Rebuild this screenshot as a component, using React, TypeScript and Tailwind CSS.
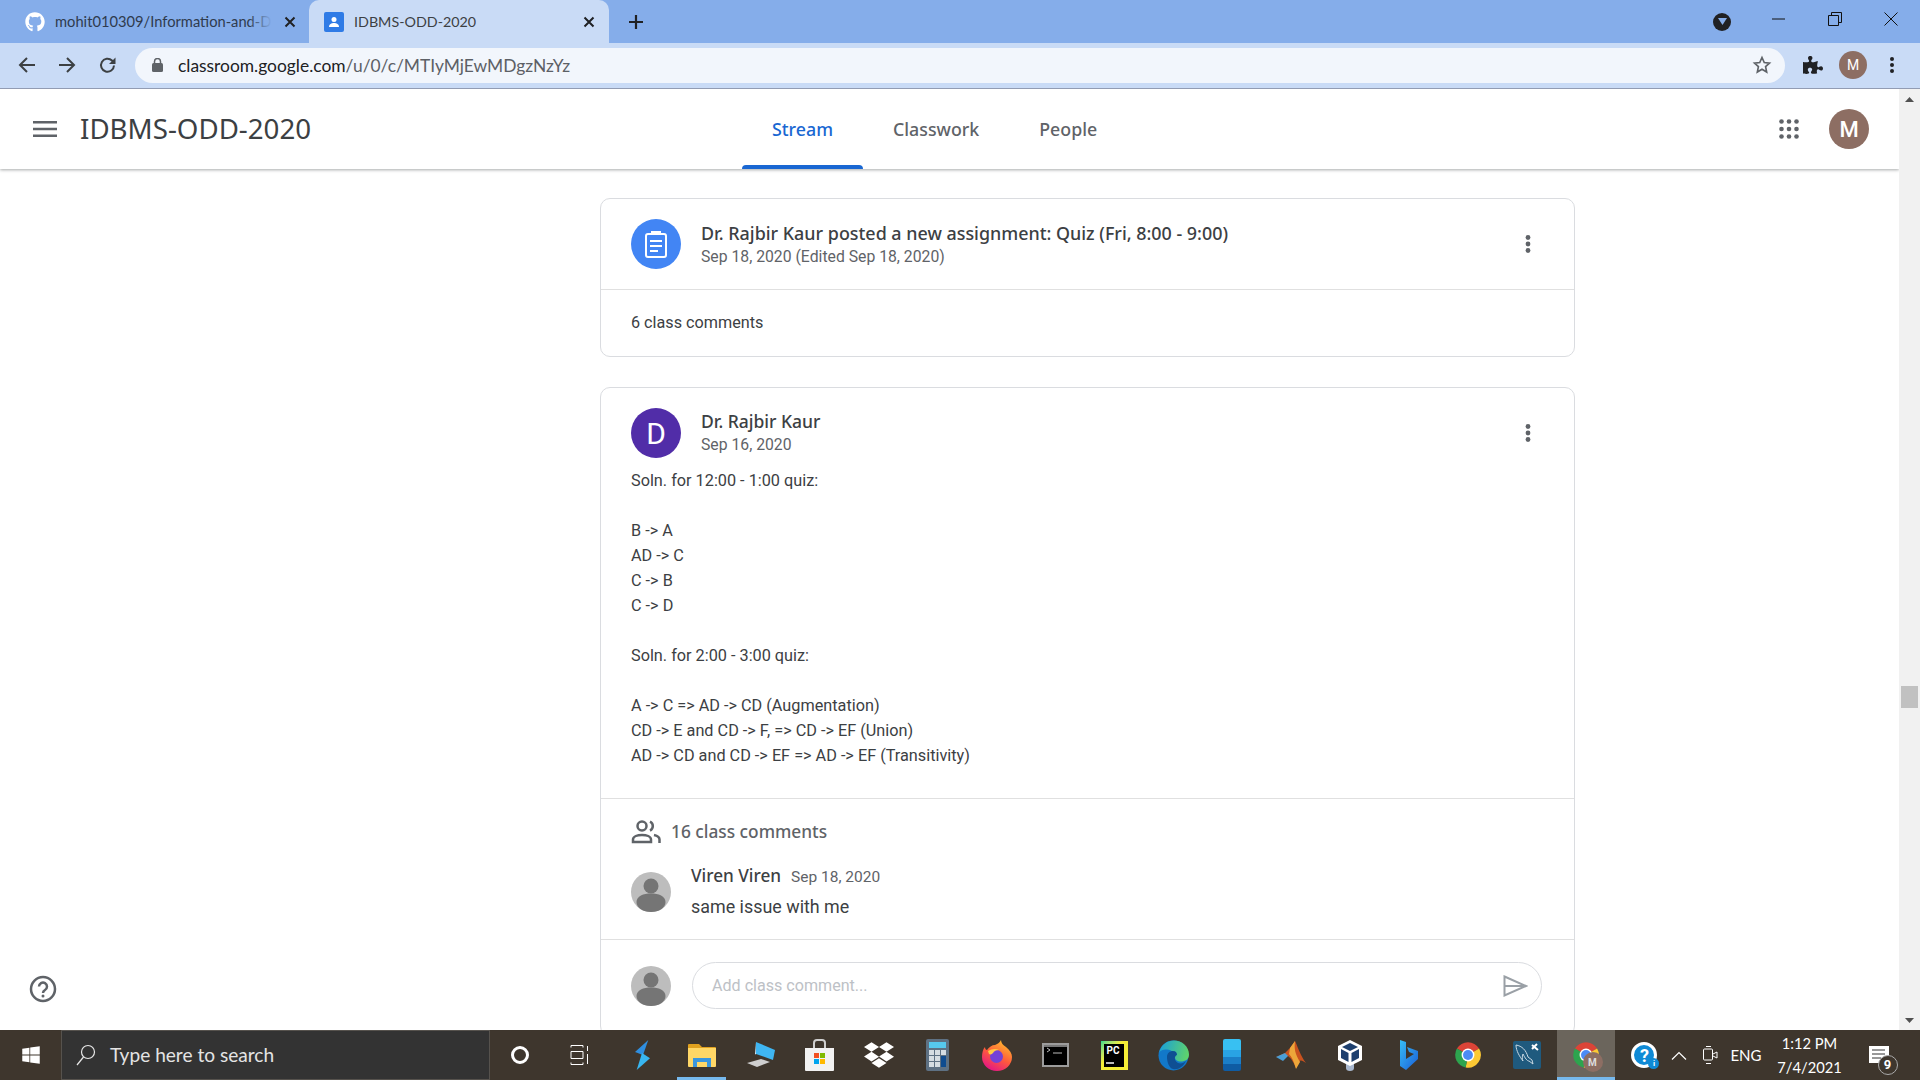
import { FaGithub, FaWindows, FaDropbox, FaPuzzlePiece } from "react-icons/fa";
import { ReactNode } from "react";

const sans = "font-['Roboto',sans-serif]";
const heading = "font-['Noto_Sans',sans-serif]";
const ui = "font-['Lato',sans-serif]";

const MoreDots = ({ className = "" }: { className?: string }) => (
  <svg width="24" height="24" viewBox="0 0 24 24" fill="#5f6368" className={className}>
    <circle cx="12" cy="5.5" r="2.4" />
    <circle cx="12" cy="12" r="2.4" />
    <circle cx="12" cy="18.5" r="2.4" />
  </svg>
);

const Person = ({ size = 40 }: { size?: number }) => (
  <svg width={size} height={size} viewBox="0 0 40 40" className="shrink-0">
    <circle cx="20" cy="20" r="20" fill="#bdbdbd" />
    <ellipse cx="20" cy="14" rx="7.5" ry="7.5" fill="#757575" />
    <path d="M5.5 30c0-6 7-8.500 14.500-8.500S34.500 24 34.500 30 28 40 20 40 5.500 36 5.500 30z" fill="#757575" />
  </svg>
);

const Tab = ({ label, active = false }: { label: string; active?: boolean }) => (
  <div className={`relative h-full px-[30px] flex items-center text-[17.800px] font-medium ${heading} ${active ? "text-[#1967d2]" : "text-[#5f6368]"}`}>
    {label}
    {active && <div className="absolute left-0 right-0 bottom-0 h-[4px] rounded-t-[4px] bg-[#1967d2]" />}
  </div>
);

const Cell = ({ children, active = false }: { children: ReactNode; active?: boolean }) => (
  <div className={`relative w-[58.95px] h-full flex items-center justify-center ${active ? "bg-[#6b655c]" : ""}`}>
    {children}
    {active && <div className="absolute left-0 right-0 bottom-0 h-[3px] bg-[#76b9ed]" />}
  </div>
);

const ChromeLogo = () => (
  <svg width="28" height="28" viewBox="0 0 48 48">
    <path d="M24 24L5 13A22 22 0 0 1 43 13z" fill="#db4437" />
    <path d="M24 24L43 13A22 22 0 0 1 20 45.600z" fill="#fcc934" />
    <path d="M24 24L20 45.600A22 22 0 0 1 5 13z" fill="#2da44e" />
    <circle cx="24" cy="24" r="11" fill="#fff" />
    <circle cx="24" cy="24" r="8.500" fill="#4c8bf5" />
  </svg>
);

export default function App() {
  return (
    <div className={`w-[1920px] h-[1080px] flex flex-col overflow-hidden bg-white ${sans}`}>
      {/* tab strip */}
      <div className="h-[43px] shrink-0 bg-[#85adea] flex items-center">
        <div className="w-[309px] h-full flex items-center pl-[25px] pr-[10px]">
          <FaGithub className="text-white text-[20px] shrink-0" />
          <div className="relative ml-[10px] w-[217px]">
            <span className={`block whitespace-nowrap text-[14.700px] text-[#2f3b4e] ${ui}`}>mohit010309/Information-and-D</span>
            <div className="absolute right-0 top-0 bottom-0 w-[24px] bg-linear-to-r from-transparent to-[#85adea]" />
          </div>
          <svg width="12" height="12" viewBox="0 0 12 12" className="ml-[12px]" stroke="#202124" strokeWidth="2"><path d="M1.500 1.500l9 9M10.500 1.500l-9 9" /></svg>
        </div>
        <div className="w-[300px] h-full bg-[#c9dbf6] rounded-t-[10px] flex items-center pl-[15px] pr-[14px]">
          <svg width="20" height="20" viewBox="0 0 20 20" className="shrink-0">
            <rect width="20" height="20" rx="2" fill="#2f7be6" />
            <circle cx="10" cy="7.500" r="2.500" fill="#fff" />
            <path d="M5 15c0-3 2.500-4 5-4s5 1 5 4z" fill="#fff" />
          </svg>
          <span className={`ml-[10px] flex-1 text-[14.300px] text-[#3c4043] ${ui}`}>IDBMS-ODD-2020</span>
          <svg width="12" height="12" viewBox="0 0 12 12" stroke="#202124" strokeWidth="2"><path d="M1.500 1.500l9 9M10.500 1.500l-9 9" /></svg>
        </div>
        <svg width="16" height="16" viewBox="0 0 16 16" className="ml-[19px]" stroke="#202124" strokeWidth="2.200"><path d="M8 1v14M1 8h14" /></svg>
        <div className="flex-1" />
        <div className="w-[18px] h-[18px] rounded-full bg-[#202124] flex items-center justify-center mr-[41px]">
          <svg width="9" height="7" viewBox="0 0 9 7"><path d="M0 0h9L4.500 7z" fill="#85adea" /></svg>
        </div>
        <div className="flex items-center gap-[42px] pr-[22px] -mt-[6px]">
          <svg width="14" height="14" viewBox="0 0 14 14" stroke="#111"><path d="M0 7h13" /></svg>
          <svg width="14" height="14" viewBox="0 0 14 14" fill="none" stroke="#111"><path d="M.500 3.500h10v10H.500zM3.500 3.500V.500h10v10h-3" /></svg>
          <svg width="14" height="14" viewBox="0 0 14 14" stroke="#111"><path d="M.500.500l13 13M13.500.500l-13 13" /></svg>
        </div>
      </div>

      {/* toolbar */}
      <div className="h-[45px] shrink-0 bg-[#c9dbf6] flex items-center pb-[1px]">
        <div className="w-[135px] flex items-center pl-[18px] gap-[22px]">
          <svg width="18" height="18" viewBox="0 0 18 18" fill="none" stroke="#3c4043" strokeWidth="2"><path d="M17 9H2M9 2L2 9l7 7" /></svg>
          <svg width="18" height="18" viewBox="0 0 18 18" fill="none" stroke="#3c4043" strokeWidth="2"><path d="M1 9h15M9 2l7 7-7 7" /></svg>
          <svg width="18" height="18" viewBox="0 0 18 18" fill="none" stroke="#3c4043" strokeWidth="2" className="ml-[1px]"><path d="M15 9.500A6.500 6.500 0 1 1 13 4.500L15.500 7" /><path d="M16.500 1.500v6.500H10z" fill="#3c4043" stroke="none" /></svg>
        </div>
        <div className="w-[1650px] h-[35px] rounded-full bg-[#f2f6fc] flex items-center pl-[17px] pr-[13px]">
          <svg width="11" height="14" viewBox="0 0 11 14" className="shrink-0"><path d="M2.500 5V3.500a3 3 0 0 1 6 0V5" fill="none" stroke="#5f6368" strokeWidth="1.500" /><rect y="5" width="11" height="9" rx="1.500" fill="#5f6368" /></svg>
          <span className={`ml-[15px] mt-[2px] text-[17.400px] text-[#5c6066] ${ui}`}>
            <span className="text-[#202124]">classroom.google.com</span>/u/0/c/MTIyMjEwMDgzNzYz
          </span>
          <div className="flex-1" />
          <svg width="20" height="20" viewBox="0 0 24 24" fill="none" stroke="#5f6368" strokeWidth="2"><path d="M12 3l2.700 6 6.300.700-4.700 4.300 1.300 6.500L12 17.200 6.400 20.500l1.300-6.500L3 9.700 9.300 9z" /></svg>
        </div>
        <FaPuzzlePiece className="ml-[18px] text-[20px] text-[#202124] shrink-0" />
        <div className="ml-[16px] w-[28px] h-[28px] rounded-full bg-[#8d6e63] text-white text-[14px] flex items-center justify-center shrink-0">M</div>
        <svg width="6" height="18" viewBox="0 0 6 18" fill="#202124" className="ml-[22px] shrink-0"><circle cx="3" cy="3" r="2" /><circle cx="3" cy="9" r="2" /><circle cx="3" cy="15" r="2" /></svg>
      </div>
      <div className="h-px shrink-0 bg-[#929cb3]" />

      {/* page + scrollbar */}
      <div className="flex-1 min-h-0 flex">
        <div className="relative flex-1 min-w-0 overflow-hidden">
          <header className="h-[80px] flex items-center shadow-[0_1px_3px_rgba(60,64,67,0.45)] relative z-10 bg-white">
            <svg width="24" height="24" viewBox="0 0 24 24" fill="#5f6368" className="ml-[33px] shrink-0"><path d="M0 4h24v2.500H0zM0 10.800h24v2.500H0zM0 17.500h24V20H0z" /></svg>
            <h1 className={`ml-[23px] w-[662px] text-[27.700px] text-[#3c4043] -mt-[1px] ${heading}`}>IDBMS-ODD-2020</h1>
            <nav className="h-full flex">
              <Tab label="Stream" active />
              <Tab label="Classwork" />
              <Tab label="People" />
            </nav>
            <div className="flex-1" />
            <svg width="20" height="20" viewBox="0 0 20 20" fill="#5f6368" className="shrink-0">
              {[2.500, 10, 17.500].flatMap((y) => [2.500, 10, 17.500].map((x) => <circle key={`${x}-${y}`} cx={x} cy={y} r="2.300" />))}
            </svg>
            <div className="ml-[30px] mr-[30px] w-[40px] h-[40px] rounded-full bg-[#8d6e63] text-white text-[22px] font-medium flex items-center justify-center">M</div>
          </header>

          <main className="pl-[600px] pt-[29px] w-[1575px]">
            {/* assignment card */}
            <section className="border border-[#dadce0] rounded-[10px]">
              <div className="h-[91px] flex items-center pl-[30px] pr-[34px] border-b border-[#e0e0e0]">
                <div className="w-[50px] h-[50px] rounded-full bg-[#4285f4] flex items-center justify-center shrink-0">
                  <svg width="24" height="28" viewBox="0 0 24 28" fill="none" stroke="#fff" strokeWidth="2"><rect x="2" y="4" width="20" height="23" rx="2" /><path d="M8 4V2h8v2zM6 11h12M6 16h12M6 21h8" /></svg>
                </div>
                <div className="ml-[20px] flex-1">
                  <div className={`text-[17.900px] leading-[24px] font-medium text-[#3c4043] ${heading}`}>Dr. Rajbir Kaur posted a new assignment: Quiz (Fri, 8:00 - 9:00)</div>
                  <div className="mt-[1px] text-[15.750px] leading-[22px] text-[#5f6368]">Sep 18, 2020 (Edited Sep 18, 2020)</div>
                </div>
                <MoreDots />
              </div>
              <div className="h-[66px] flex items-center pl-[30px] text-[16.200px] text-[#3c4043]">6 class comments</div>
            </section>

            {/* post card */}
            <section className="mt-[30px] border border-[#dadce0] rounded-[10px]">
              <div className="pt-[20px] flex items-center pl-[30px] pr-[34px]">
                <div className="w-[50px] h-[50px] rounded-full bg-[#512da8] text-white text-[30px] flex items-center justify-center shrink-0">D</div>
                <div className="ml-[20px] flex-1">
                  <div className={`text-[17.500px] leading-[24px] font-medium text-[#3c4043] -mt-[1px] ${heading}`}>Dr. Rajbir Kaur</div>
                  <div className="mt-[1px] text-[15.750px] leading-[22px] text-[#5f6368]">Sep 16, 2020</div>
                </div>
                <MoreDots />
              </div>
              <div className="pl-[30px] pt-[10px] pb-[30px] text-[16.250px] leading-[25px] text-[#3c4043] border-b border-[#e0e0e0]">
                <p>Soln. for 12:00 - 1:00 quiz:</p>
                <p className="mt-[25px]">B -&gt; A</p>
                <p>AD -&gt; C</p>
                <p>C -&gt; B</p>
                <p>C -&gt; D</p>
                <p className="mt-[25px]">Soln. for 2:00 - 3:00 quiz:</p>
                <p className="mt-[25px]">A -&gt; C =&gt; AD -&gt; CD (Augmentation)</p>
                <p>CD -&gt; E and CD -&gt; F, =&gt; CD -&gt; EF (Union)</p>
                <p>AD -&gt; CD and CD -&gt; EF =&gt; AD -&gt; EF (Transitivity)</p>
              </div>
              <div className="pl-[30px] pt-[20px] pb-[20px] border-b border-[#e0e0e0]">
                <div className="flex items-center h-[26px]">
                  <svg width="30" height="24" viewBox="0 0 30 24" fill="none" stroke="#5f6368" strokeWidth="2.500"><circle cx="11" cy="6" r="4.500" /><path d="M2 22v-2.500c0-3 4.500-4.500 9-4.500s9 1.500 9 4.500V22zM19 1.500a5 5 0 0 1 0 9M23 15c3 .700 5.500 2 5.500 4.500V23" /></svg>
                  <span className={`ml-[10px] text-[17.300px] font-medium text-[#5f6368] ${heading}`}>16 class comments</span>
                </div>
                <div className="mt-[27px] flex items-start">
                  <Person />
                  <div className="ml-[20px] -mt-[8px]">
                    <div className="flex items-baseline">
                      <span className={`text-[17.200px] leading-[24px] font-medium text-[#3c4043] ${heading}`}>Viren Viren</span>
                      <span className="ml-[10px] text-[15.500px] text-[#5f6368]">Sep 18, 2020</span>
                    </div>
                    <div className="mt-[5px] text-[17.900px] leading-[25px] text-[#3c4043]">same issue with me</div>
                  </div>
                </div>
              </div>
              <div className="pl-[30px] pr-[32px] pt-[22px] pb-[26px] flex items-center">
                <Person />
                <div className="ml-[21px] flex-1 h-[47px] rounded-full border border-[#dadce0] flex items-center pl-[19px] pr-[13px]">
                  <span className="flex-1 text-[16.100px] text-[#bdc1c6]">Add class comment...</span>
                  <svg width="25" height="22" viewBox="0 0 25 22" fill="none" stroke="#9aa0a6" strokeWidth="2"><path d="M1.500 1.500L23 11 1.500 20.500zM1.500 11H23" /></svg>
                </div>
              </div>
            </section>
          </main>

          {/* help button floats over the page */}
          <svg width="28" height="28" viewBox="0 0 28 28" fill="none" className="absolute left-[29px] bottom-[27px]">
            <circle cx="14" cy="14" r="12" stroke="#5f6368" strokeWidth="2.500" />
            <path d="M10 11.500a4 4 0 1 1 6 3.500c-1.300.800-2 1.500-2 3" stroke="#5f6368" strokeWidth="2.500" />
            <circle cx="14" cy="21" r="1.500" fill="#5f6368" />
          </svg>
        </div>

        {/* scrollbar */}
        <div className="w-[21px] shrink-0 bg-[#f1f1f1] flex flex-col items-center pt-[8px] pb-[7px]">
          <svg width="9" height="5" viewBox="0 0 9 5"><path d="M0 5h9L4.500 0z" fill="#505050" /></svg>
          <div className="mt-[584px] w-[17px] h-[22px] bg-[#c1c1c1]" />
          <div className="flex-1" />
          <svg width="9" height="5" viewBox="0 0 9 5"><path d="M0 0h9L4.500 5z" fill="#505050" /></svg>
        </div>
      </div>

      {/* windows taskbar */}
      <div className="h-[50px] shrink-0 bg-[#3e362d] flex items-center text-white">
        <div className="w-[61px] flex justify-center"><FaWindows className="text-[20px]" /></div>
        <div className="w-[429px] h-full bg-[#333333] border border-[#56524d] flex items-center pl-[14px]">
          <svg width="20" height="22" viewBox="0 0 20 22" fill="none" stroke="#e8e8e8" strokeWidth="1.200"><circle cx="12" cy="8" r="6.500" /><path d="M7.500 13L1 21" /></svg>
          <span className={`ml-[14px] text-[19.100px] text-[#e4e4e4] ${ui}`}>Type here to search</span>
        </div>
        <div className="w-[60px] flex justify-center">
          <div className="w-[18px] h-[18px] rounded-full border-[3px] border-white" />
        </div>
        <div className="w-[60px] flex justify-center">
          <svg width="20" height="20" viewBox="0 0 20 20" fill="none" stroke="#fff"><path d="M1 .500h12M1 19.500h12M1 6.500h12v7H1zM17.500 1v5M17.500 9v10M13 .500v2M1 .500v2M1 17.500v2M13 17.500v2" /></svg>
        </div>
        <div className="ml-[3.500px] h-full flex">
          <Cell>
            <svg width="15" height="30" viewBox="0 0 15 30"><path d="M13.300 0L0 12l8 3z" fill="#2f8fe0" /><path d="M1.700 30L15 18.300 7 13z" fill="#38b6f0" /></svg>
          </Cell>
          <Cell>
            <svg width="28" height="24" viewBox="0 0 28 24"><path d="M0 2a1 1 0 0 1 1-1h10l3 3h13a1 1 0 0 1 1 1v4H0z" fill="#e0a11f" /><path d="M0 5h28v18a1 1 0 0 1-1 1H1a1 1 0 0 1-1-1z" fill="#ffd766" /><path d="M5 15h18v9h-4v-5H9v5H5z" fill="#3a96dd" /></svg>
            <div className="absolute left-[5px] right-[5px] bottom-0 h-[3px] bg-[#76b9ed]" />
          </Cell>
          <Cell>
            <svg width="30" height="28" viewBox="0 0 30 28"><path d="M10 1l19 8-2 10-17-6z" fill="#3fb6f2" /><path d="M10 1l-1 12 1 .600z" fill="#cdeafa" /><path d="M1 22l14-4 9 3-13 5z" fill="#cfcfcf" /></svg>
          </Cell>
          <Cell>
            <svg width="29" height="32" viewBox="0 0 29 32"><path d="M9 9V4a3 3 0 0 1 3-3h5a3 3 0 0 1 3 3v5" fill="none" stroke="#d0d0d0" strokeWidth="2" /><path d="M0 9h29v22a1 1 0 0 1-1 1H1a1 1 0 0 1-1-1z" fill="#f2f2f2" /><rect x="9" y="14" width="5" height="5" fill="#f25022" /><rect x="15" y="14" width="5" height="5" fill="#7fba00" /><rect x="9" y="20" width="5" height="5" fill="#00a4ef" /><rect x="15" y="20" width="5" height="5" fill="#ffb900" /></svg>
          </Cell>
          <Cell><FaDropbox className="text-[30px] text-white" /></Cell>
          <Cell>
            <svg width="23" height="32" viewBox="0 0 23 32"><rect width="23" height="32" rx="2" fill="#5e7183" /><rect x="3" y="3" width="17" height="6" fill="#56c9ee" /><g fill="#d5dde2"><rect x="3" y="11" width="5" height="5" /><rect x="9" y="11" width="5" height="5" /><rect x="15" y="11" width="5" height="5" /><rect x="3" y="17" width="5" height="5" /><rect x="9" y="17" width="5" height="5" /><rect x="3" y="23" width="5" height="5" /><rect x="9" y="23" width="5" height="5" /></g><rect x="15" y="17" width="5" height="11" fill="#0f4c8f" /></svg>
          </Cell>
          <Cell>
            <svg width="30" height="31" viewBox="0 0 30 31">
              <defs><linearGradient id="ff" x1="0.800" y1="0.100" x2="0.300" y2="1"><stop offset="0" stopColor="#ffb52e" /><stop offset="0.500" stopColor="#ff5a3c" /><stop offset="1" stopColor="#e31587" /></linearGradient></defs>
              <path d="M19 0c0 3 2 5 5 7 4 3 6 7 6 10a15 14 0 0 1-30 0c0-4 1-8 3-10 0 2 1 3 2 3 2-3 5-5 8-5 3-1 5-3 6-5z" fill="url(#ff)" />
              <circle cx="14.500" cy="16.500" r="6.500" fill="#7442d6" />
              <path d="M6 11c3-2 8-3 11-1-3 0-5 1-6 3-1 1-2 2-4 1z" fill="#ffcb45" />
            </svg>
          </Cell>
          <Cell>
            <div className="w-[27px] h-[24px] border-2 border-[#9c9c9c] bg-black">
              <div className="h-[2px] bg-[#777]" />
              <svg width="18" height="8" viewBox="0 0 18 8" className="ml-[2px]"><path d="M1 1l3 2-3 2M7 6h9" stroke="#bbb" fill="none" /></svg>
            </div>
          </Cell>
          <Cell>
            <div className="w-[27px] h-[29px] bg-linear-to-br from-[#21d789] to-[#f5ee37] to-40% flex items-center justify-center">
              <div className={`w-[20px] h-[23px] bg-black px-[2px] pt-[1px] ${sans}`}>
                <div className="text-[10px] leading-[12px] font-bold text-white">PC</div>
                <div className="mt-[5px] w-[8px] h-[2px] bg-[#bbb]" />
              </div>
            </div>
          </Cell>
          <Cell>
            <svg width="31" height="31" viewBox="0 0 31 31">
              <defs><linearGradient id="edgeTop" x1="0" y1="0.300" x2="1" y2="0.500"><stop offset="0" stopColor="#1a9fd8" /><stop offset="1" stopColor="#5fd36b" /></linearGradient></defs>
              <circle cx="15.500" cy="15.500" r="15" fill="#1278c9" />
              <path d="M1 13C3 4 10 .500 16 .500c8 0 15 6 15 14 0 5-4 7-8 7-4 0-6-2-6-4 0-4-3-8-8-8S2 11 1 13z" fill="url(#edgeTop)" />
              <path d="M9 17c0-4 3-6 6-6s4 2 4 4c-3 1-3 6 1 8 3 1 6 0 8-2-3 6-8 9-13 8-4-1-6-7-6-12z" fill="#0f4f93" />
            </svg>
          </Cell>
          <Cell>
            <div className="w-[18px] h-[32px] rounded-[2px] overflow-hidden flex flex-col">
              <div className="h-[11px] bg-[#38c0f2]" />
              <div className="h-[7px] bg-[#29a3e4]" />
              <div className="h-[7px] bg-[#1b7ec7]" />
              <div className="h-[7px] bg-[#0f5ca3]" />
            </div>
          </Cell>
          <Cell>
            <svg width="30" height="30" viewBox="0 0 30 30"><path d="M0 17l9-4 5-5 5-7c2 4 6 16 11 22-3-2-5-3-6-2l-4 7c-2-5-5-10-8-12z" fill="#c9521e" /><path d="M19 1c-1 7 0 13 5 21l-4 7c-2-7-4-12-7-15l1-6z" fill="#eda63a" /><path d="M0 17l9-4 3 3-5 5z" fill="#4a9ed6" /></svg>
          </Cell>
          <Cell>
            <svg width="26" height="32" viewBox="0 0 26 32">
              <path d="M9 24h8v5a4 3 0 0 1-8 0z" fill="#a9b8cf" />
              <path d="M13 1l12 6v14l-12 6-12-6V7z" fill="#fff" />
              <path d="M13 4l8 4-8 4-8-4z" fill="#1d3f6e" />
              <path d="M4 10l7.500 4v9L4 19z" fill="#1d3f6e" />
              <path d="M22 10l-7.500 4v9l7.500-4z" fill="#1d3f6e" />
            </svg>
          </Cell>
          <Cell>
            <svg width="20" height="30" viewBox="0 0 20 30">
              <defs><linearGradient id="bing" x1="0" y1="0" x2="1" y2="1"><stop offset="0" stopColor="#37bdf5" /><stop offset="1" stopColor="#1a5fd8" /></linearGradient></defs>
              <path d="M1 0l6 2v17l8-5-5-2-2-5 11 4v8L7 30l-6-4z" fill="url(#bing)" />
            </svg>
          </Cell>
          <Cell><ChromeLogo /></Cell>
          <Cell>
            <svg width="28" height="28" viewBox="0 0 28 28"><rect width="28" height="28" rx="2" fill="#1f5a7e" /><path d="M3 4c6 1 10 5 12 12l4 3 1 4-4-3c-2 0-4-3-6-7-1 3-1 5 0 7-3-4-7-10-7-16z" fill="none" stroke="#c9d9e3" /><path d="M19 4l6 5M24 3l-5 5" stroke="#fff" strokeWidth="2" /></svg>
          </Cell>
          <Cell active>
            <ChromeLogo />
            <div className="absolute left-[26px] top-[22px] w-[20px] h-[20px] rounded-full bg-[#8d6e63] text-[10px] font-bold text-[#ddd] flex items-center justify-center">M</div>
          </Cell>
        </div>
        <div className="relative ml-[16px] w-[26px] h-[26px] rounded-full border-[3px] border-white bg-[#0f8ad6] text-white text-[18px] font-bold flex items-center justify-center shrink-0">
          ?
          <div className="absolute -right-[5px] -bottom-[4px] w-[11px] h-[11px] rounded-full bg-[#0f8ad6] text-[8px] flex items-center justify-center">i</div>
        </div>
        <svg width="16" height="9" viewBox="0 0 16 9" fill="none" stroke="#fff" strokeWidth="1.200" className="ml-[14px]"><path d="M1 8.500l7-7 7 7" /></svg>
        <svg width="15" height="18" viewBox="0 0 15 18" fill="none" stroke="#fff" className="ml-[16px]"><rect x=".500" y="3" width="9" height="11" rx="1" /><path d="M10 8l4-2v6l-4-2M3 .500h5M3 17.500h5" /></svg>
        <span className={`ml-[12px] text-[15px] ${ui}`}>ENG</span>
        <div className={`ml-[15px] w-[66px] text-center text-[14.700px] leading-[24px] ${ui}`}>
          <div>1:12 PM</div>
          <div>7/4/2021</div>
        </div>
        <div className="relative ml-[26px]">
          <svg width="20" height="18" viewBox="0 0 20 18" fill="#fff"><path d="M0 0h20v17H0z" /><path d="M3 4h13M3 8h13M3 12h9" stroke="#333" /></svg>
          <div className="absolute left-[9px] top-[9px] w-[20px] h-[20px] rounded-full bg-[#3e362d] border border-[#aaa] text-[13px] font-bold flex items-center justify-center">9</div>
        </div>
      </div>
    </div>
  );
}
